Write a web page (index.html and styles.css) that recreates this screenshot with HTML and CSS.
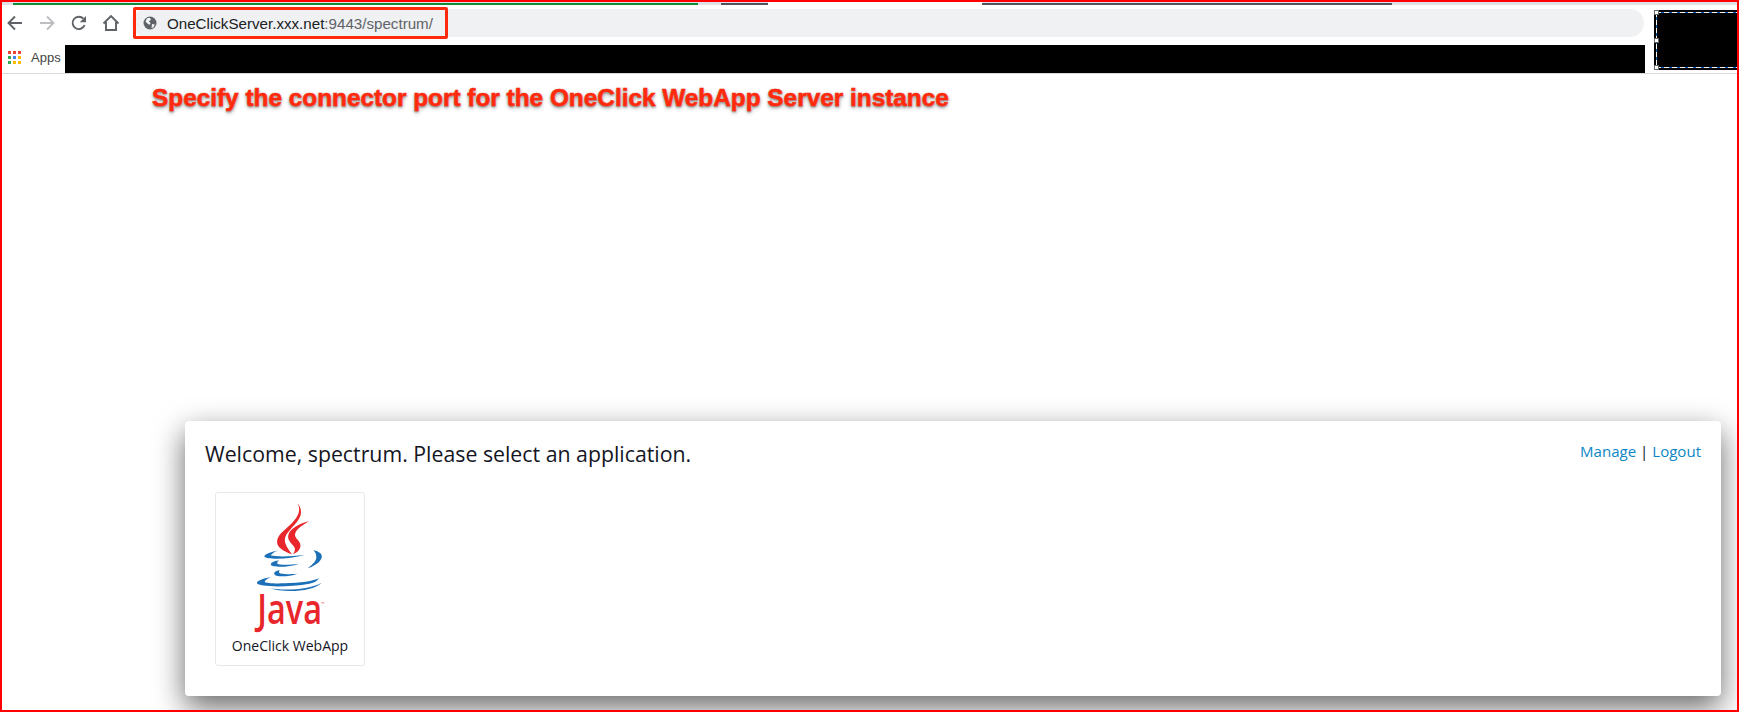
FILE: index.html
```html
<!DOCTYPE html>
<html lang="en">
<head>
<meta charset="utf-8">
<title>OneClick WebApp</title>
<link rel="stylesheet" href="styles.css">
</head>
<body>
<div class="frame">
  <header class="browser">
    <div class="browser-left">
      <div class="tabstrip">
        <span class="seg seg-a"></span><span class="seg seg-green"></span><span class="seg seg-b"></span><span class="seg seg-dark1"></span><span class="seg seg-white"></span><span class="seg seg-dark2"></span>
      </div>
      <div class="toolbar">
        <svg class="nav" viewBox="0 0 20 20"><path d="M17 10H4M10 3.5 3.5 10l6.5 6.500" fill="none" stroke="#5f6368" stroke-width="1.900"/></svg>
        <svg class="nav" viewBox="0 0 20 20"><path d="M3 10h13M10 3.500l6.500 6.500-6.500 6.500" fill="none" stroke="#bcbec2" stroke-width="1.900"/></svg>
        <svg class="nav" viewBox="0 0 20 20"><path d="M15.600 12.200A6.200 6.200 0 1 1 14.400 5.700" fill="none" stroke="#5f6368" stroke-width="1.900"/><path d="M17 3v6.300h-6.300z" fill="#5f6368"/></svg>
        <svg class="nav" viewBox="0 0 20 20"><path d="M2.500 10.500 10 3l7.500 7.500M5 9v8h10V9" fill="none" stroke="#5f6368" stroke-width="1.900"/></svg>
        <div class="omnibox">
          <svg class="globe" viewBox="0 0 14 14"><circle cx="7" cy="7" r="6.500" fill="#5f6368"/><path d="M4 2.200 6.800 1.800 8 3.500 6 5.500 7.500 7 6.800 8.800 5 8 2.500 5.500ZM9 8l2.800.4-1.400 3L8.500 12Z" fill="#f1f3f4"/></svg>
          <span class="url">OneClickServer.xxx.net<span class="url-rest">:9443/spectrum/</span></span>
        </div>
      </div>
      <div class="bookmarks">
        <div class="apps-group">
          <span class="apps-grid">
            <i class="d-red"></i><i class="d-red"></i><i class="d-red"></i>
            <i class="d-green"></i><i class="d-blue"></i><i class="d-yellow"></i>
            <i class="d-green"></i><i class="d-yellow"></i><i class="d-yellow"></i>
          </span>
          <span class="apps-label">Apps</span>
        </div>
        <div class="redacted"></div>
      </div>
    </div>
    <div class="avatar-redacted">
      <span class="handle handle-top"></span>
      <span class="handle handle-mid"></span>
      <span class="handle handle-bottom"></span>
    </div>
  </header>

  <div class="url-callout"></div>

  <main class="page">
    <p class="caption">Specify the connector port for the OneClick WebApp Server instance</p>
    <section class="card">
      <div class="card-head">
        <h1 class="welcome">Welcome, spectrum. Please select an application.</h1>
        <div class="links"><a class="link">Manage</a> <span class="sep">|</span> <a class="link">Logout</a></div>
      </div>
      <a class="tile">
        <svg class="java" viewBox="0 0 330 435">
          <g fill="#e8262b">
            <path d="M190 25C202 45 194 66 167 91C142 114 126 125 130 147C135 162 155 171 174 178C162 160 148 145 154 126C160 107 190 87 199 63C204 48 199 35 190 25Z"/>
            <path d="M224 79C195 87 168 101 163 120C159 136 174 146 181 156C185 163 182 171 177 178C194 171 203 158 198 145C194 133 179 128 184 114C189 101 207 90 224 79Z"/>
          </g>
          <g fill="#1b70b8">
            <path d="M135 166C112 171 93 176 91 185C100 194 168 193 212 180C170 185 127 186 110 181C114 176 123 170 135 166Z"/>
            <path d="M238 166C256 169 266 178 263 188C258 203 240 213 221 220C236 209 247 198 247 187C247 178 244 171 238 166Z"/>
            <path d="M135 196C117 199 109 204 111 210C116 217 162 218 196 206C165 210 137 210 130 206C129 203 131 199 135 196Z"/>
            <path d="M137 225C122 228 118 234 122 239C130 247 167 245 190 236C165 238 142 238 137 235C134 232 135 228 137 225Z"/>
            <path d="M112 246C85 251 67 258 69 265C74 276 160 278 226 266C241 263 252 258 254 250C240 258 200 264 150 265C117 266 94 264 92 261C92 256 100 251 112 246Z"/>
            <path d="M105 279C150 288 225 284 263 263C235 291 150 294 105 279Z"/>
          </g>
          <text class="java-word" x="70" y="387" textLength="194" lengthAdjust="spacingAndGlyphs">Java</text>
          <text class="java-tm" x="262" y="329">™</text>
        </svg>
        <span class="tile-label">OneClick WebApp</span>
      </a>
    </section>
  </main>
</div>
</body>
</html>
```

FILE: styles.css
```css
* { box-sizing: border-box; }
html, body { margin: 0; padding: 0; }
body { background: #fff; font-family: "Open Sans", sans-serif; }

.frame {
  position: relative;
  width: 1739px;
  height: 712px;
  border: 2px solid #fe0000;
  display: flex;
  flex-direction: column;
  overflow: hidden;
  background: #fff;
}

/* Browser chrome */
.browser {
  display: flex;
  align-items: flex-start;
  border-bottom: 1px solid #d9d9d9;
  height: 72px;
  flex: none;
}
.browser-left { width: 1643px; flex: none; }

.tabstrip { display: flex; height: 3px; width: 1735px; background: #dee1e6; padding-top: 1px; }
.seg { display: block; height: 2px; }
.seg-a { width: 11px; }
.seg-green { width: 685px; background: #0f8a36; }
.seg-b { width: 23px; }
.seg-dark1 { width: 47px; background: #50535b; }
.seg-white { width: 214px; background: #fff; height: 3px; margin-top: -1px; }
.seg-dark2 { width: 410px; background: #50535b; }

.toolbar {
  display: flex;
  align-items: center;
  height: 36px;
  margin-bottom: 4px;
  padding-left: 3px;
}
.nav { width: 20px; height: 20px; flex: none; margin-right: 12px; }
.omnibox {
  display: flex;
  align-items: center;
  width: 1512px;
  height: 28px;
  margin-left: -1px;
  border-radius: 14px;
  background: #eff1f3;
  padding-left: 11px;
}
.globe { width: 14px; height: 14px; flex: none; }
.url { margin-left: 10px; padding-top: 1px; font: 15.150px/1 "Liberation Sans", Arial, sans-serif; color: #202124; white-space: nowrap; }
.url-rest { color: #5f6368; }

.bookmarks { display: flex; height: 28px; }
.apps-group { display: flex; align-items: center; width: 63px; padding: 0 0 4px 6px; }
.apps-grid { display: grid; grid-template-columns: repeat(3, 3px); grid-auto-rows: 3px; gap: 2px; margin-right: 10px; }
.apps-grid i { display: block; }
.d-red { background: #ea4335; }
.d-green { background: #34a853; }
.d-blue { background: #4285f4; }
.d-yellow { background: #fbbc04; }
.apps-label { font: 13px/1 "Liberation Sans", Arial, sans-serif; color: #444; }
.redacted { flex: 1; background: #000; }

.avatar-redacted {
  position: relative;
  flex: none;
  width: 83px;
  height: 60px;
  margin: 8px 0 0 9px;
  background-color: #000;
  background-image:
    repeating-linear-gradient(90deg, #fff 0 5px, #0b63b5 5px 8px),
    repeating-linear-gradient(90deg, #fff 0 5px, #0b63b5 5px 8px),
    repeating-linear-gradient(180deg, #fff 0 5px, #0b63b5 5px 8px);
  background-size: 100% 1px, 100% 1px, 1px 100%;
  background-position: 2px 2px, 2px 57px, 2px 2px;
  background-repeat: no-repeat;
}
.handle { position: absolute; left: 0; width: 5px; height: 5px; background: #fff; border: 1px solid #666; }
.handle-top { top: 0; }
.handle-mid { top: 28px; }
.handle-bottom { top: 55px; }

.url-callout {
  position: absolute;
  left: 131px;
  top: 5px;
  width: 315px;
  height: 32px;
  border: 3px solid #ff2a0c;
  border-radius: 2px;
}

/* Page */
.page { flex: 1; display: flex; flex-direction: column; min-height: 0; }
.caption {
  margin: 0;
  padding: 9px 0 0 150px;
  font: bold 24.360px/29px "Liberation Sans", Arial, sans-serif;
  color: #ff2a0c;
  -webkit-text-stroke: 0.6px #ff2a0c;
  text-shadow: 0 0 2px #fff, 0 1px 2px rgba(0,0,0,.6), 0 2px 4px rgba(0,0,0,.35);
  white-space: nowrap;
}
.card {
  margin: auto 16px 14px auto;
  width: 1536px;
  height: 275px;
  flex: none;
  background: #fff;
  border-radius: 4px;
  padding: 18px 20px 0 20px;
  box-shadow: 0 11px 30px rgba(0,0,0,.6);
}
.card-head { display: flex; justify-content: space-between; align-items: flex-start; }
.welcome { margin: 0; font-size: 21.300px; font-weight: 400; line-height: 30px; color: #14161f; }
.links { padding-top: 1px; font-size: 15.050px; line-height: 22px; color: #14161f; white-space: nowrap; }
.link { color: #0d86c6; }
.tile {
  display: flex;
  flex-direction: column;
  align-items: center;
  width: 150px;
  height: 174px;
  margin: 23px 0 0 10px;
  border: 1px solid #e8e8e8;
  border-radius: 3px;
}
.java { width: 110px; height: 145px; margin: 2px 0 0 -2px; flex: none; }
.java-word { font-family: "Open Sans", sans-serif; font-size: 123px; font-weight: 600; fill: #e8262b; }
.java-tm { font-family: "Open Sans", sans-serif; font-size: 12px; fill: #e8262b; }
.tile-label { margin-top: -3px; font-size: 14px; line-height: 18px; color: #14161f; white-space: nowrap; }
```
